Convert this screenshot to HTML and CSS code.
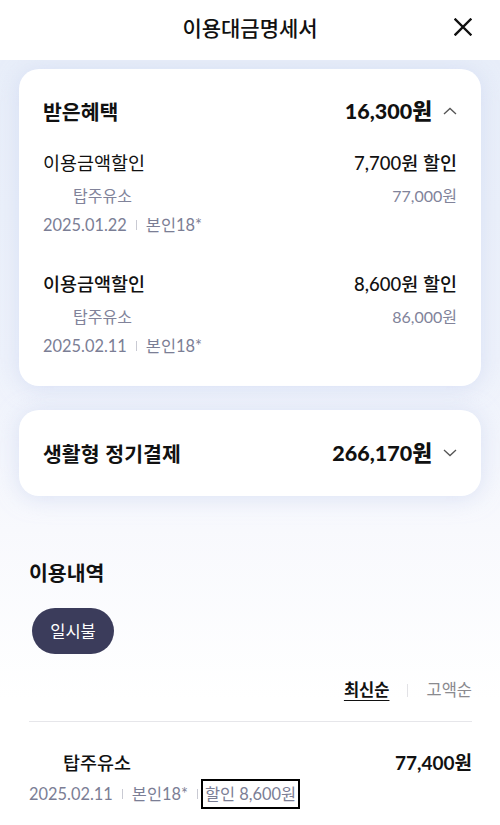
FILE: index.html
```html
<!DOCTYPE html>
<html lang="ko">
<head>
<meta charset="utf-8">
<title>이용대금명세서</title>
<link rel="stylesheet" href="styles.css">
</head>
<body>
<header class="topbar">
  <h1 class="topbar-title">이용대금명세서</h1>
  <button class="close-btn" aria-label="닫기">
    <svg width="18" height="18" viewBox="0 0 18 18"><path d="M1.5 1.5L16.5 16.5M16.5 1.5L1.5 16.5" stroke="#111" stroke-width="2.4" fill="none" stroke-linecap="square"/></svg>
  </button>
</header>
<main class="content">
  <section class="card">
    <div class="card-head">
      <span class="card-title">받은혜택</span>
      <span class="card-total">16,300원
        <svg class="chev" width="14" height="8" viewBox="0 0 14 8"><path d="M1 7L7 1.5L13 7" stroke="#555" stroke-width="1.3" fill="none"/></svg>
      </span>
    </div>
    <div class="benefit first">
      <div class="row main"><span>이용금액할인</span><span>7,700원 할인</span></div>
      <div class="row sub"><span class="merchant">탑주유소</span><span>77,000원</span></div>
      <div class="meta"><span>2025.01.22</span><i class="sep"></i><span>본인18*</span></div>
    </div>
    <div class="benefit">
      <div class="row main strong"><span>이용금액할인</span><span>8,600원 할인</span></div>
      <div class="row sub"><span class="merchant">탑주유소</span><span>86,000원</span></div>
      <div class="meta"><span>2025.02.11</span><i class="sep"></i><span>본인18*</span></div>
    </div>
  </section>
  <section class="card compact">
    <div class="card-head">
      <span class="card-title">생활형 정기결제</span>
      <span class="card-total">266,170원
        <svg class="chev" width="14" height="8" viewBox="0 0 14 8"><path d="M1 1L7 6.5L13 1" stroke="#555" stroke-width="1.3" fill="none"/></svg>
      </span>
    </div>
  </section>
  <section class="history">
    <h2 class="history-title">이용내역</h2>
    <button class="pill">일시불</button>
    <div class="sort">
      <span class="sort-on">최신순</span><i class="sort-sep"></i><span class="sort-off">고액순</span>
    </div>
    <div class="item">
      <div class="item-row"><span class="item-name">탑주유소</span><span class="item-amt">77,400원</span></div>
      <div class="meta"><span>2025.02.11</span><i class="sep"></i><span>본인18*</span><i class="sep"></i><span class="disc">할인 8,600원</span></div>
    </div>
  </section>
</main>
</body>
</html>
```
FILE: styles.css
```css
* { box-sizing: border-box; }
html, body { margin: 0; padding: 0; }
body {
  width: 500px;
  font-family: Lato, "Noto Sans CJK KR", sans-serif;
  color: #111;
  background: #fff;
}
.topbar {
  height: 60px;
  display: flex;
  align-items: flex-start;
  justify-content: center;
  position: relative;
  background: #fff;
}
.topbar-title {
  margin: 0;
  font-family: "Noto Sans CJK KR", sans-serif;
  font-size: 21px;
  line-height: 54px;
  font-weight: 500;
  color: #111;
}
.close-btn {
  position: absolute;
  right: 28px;
  top: 18px;
  width: 18px;
  height: 18px;
  padding: 0;
  border: 0;
  background: none;
  display: flex;
}
.content {
  padding: 9px 19px 0;
  background: linear-gradient(180deg, #e8eef9 0, #eef2fb 300px, #f8f9fd 470px, #fff 640px);
  min-height: 765px;
}
.card {
  background: #fff;
  border-radius: 20px;
  padding: 28px 24px 29px;
  box-shadow: 0 2px 22px rgba(196, 208, 238, 0.55);
}
.card + .card { margin-top: 24px; }
.card.compact { padding: 29px 24px 29px; }
.card-head {
  display: flex;
  justify-content: space-between;
  align-items: center;
  line-height: 28px;
}
.card-title {
  font-family: "Noto Sans CJK KR", sans-serif;
  font-size: 20.5px;
  font-weight: 700;
}
.card-total {
  font-size: 21.5px;
  font-weight: 900;
  display: flex;
  align-items: center;
}
.chev { margin-left: 11px; }
.benefit { margin-top: 36px; }
.benefit.first { margin-top: 26px; }
.row {
  display: flex;
  justify-content: space-between;
  align-items: center;
}
.row.main {
  font-size: 18.5px;
  line-height: 24px;
}
.row.main span:last-child { font-weight: 500; font-size: 18.5px; }
.row.main.strong span:first-child { font-weight: 500; }
.row.sub {
  margin-top: 10px;
  font-size: 16px;
  line-height: 22px;
  color: #81839a;
}
.merchant { padding-left: 30px; font-size: 16px; }
.meta {
  margin-top: 7px;
  display: flex;
  align-items: center;
  font-size: 16.4px;
  line-height: 22px;
  color: #7b7e95;
}
.sep {
  width: 1px;
  height: 10px;
  background: #c9cad3;
  margin: 0 9px;
}
.history { padding: 62px 9px 40px 10px; }
.history-title {
  margin: 0;
  font-family: "Noto Sans CJK KR", sans-serif;
  font-size: 20.5px;
  font-weight: 700;
  line-height: 28px;
}
.pill {
  margin: 22px 0 0 3px;
  height: 46px;
  width: 82px;
  border: 0;
  border-radius: 23px;
  background: #3b3c5b;
  color: #fff;
  font-family: "Noto Sans CJK KR", sans-serif;
  font-size: 16.5px;
  padding: 0;
}
.sort {
  margin-top: 25px;
  display: flex;
  justify-content: flex-end;
  align-items: center;
  font-size: 16.5px;
  line-height: 22px;
  padding-bottom: 20px;
  border-bottom: 1px solid #e6e6ea;
}
.sort-on {
  font-weight: 700;
  text-decoration: underline;
  text-underline-offset: 4px;
}
.sort-sep {
  width: 1px;
  height: 13px;
  background: #e2e2e6;
  margin: 0 18px;
}
.sort-off { color: #8a8a8f; }
.item { padding-top: 28px; }
.item-row {
  display: flex;
  justify-content: space-between;
  align-items: center;
  line-height: 26px;
}
.item-name {
  padding-left: 34px;
  font-size: 18.5px;
  font-weight: 500;
}
.item-amt {
  font-size: 19px;
  font-weight: 700;
}
.item .meta { margin-top: 3px; }
.disc {
  border: 2px solid #000;
  padding: 2px 2px;
  line-height: 22px;
  margin-left: -6px;
}
```
